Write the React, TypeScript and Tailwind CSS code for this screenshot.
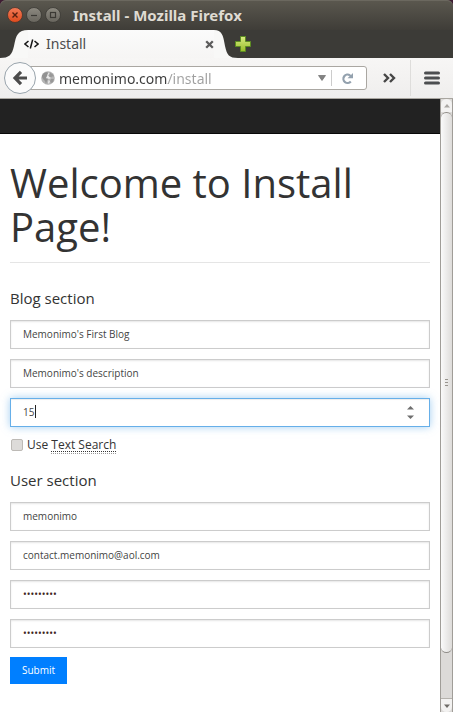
import React from "react";

type FieldProps = {
  id: string;
  label: string;
  value: string;
  type?: string;
};

const fieldClass =
  "block h-[29px] w-full border border-[#cccccc] bg-white px-3 pb-px text-[10px] shadow-[inset_0_1px_2px_rgba(0,0,0,0.1)] outline-none";

function Field({ id, label, value, type = "text" }: FieldProps) {
  const color = type === "password" ? "text-[#3d2420]" : "text-[#444444]";
  return <input id={id} aria-label={label} type={type} defaultValue={value} className={`${fieldClass} ${color}`} />;
}

function PostsField() {
  return (
    <div className="relative">
      <input
        id="posts"
        aria-label="Posts per page"
        type="text"
        inputMode="numeric"
        defaultValue="15"
        className="block h-[29px] w-full border border-[#66afe9] bg-white px-3 pb-px text-[10px] text-[#444444] shadow-[inset_0_1px_1px_rgba(0,0,0,0.075),0_0_8px_rgba(102,175,233,0.6)] outline-none"
      />
      <span className="absolute top-[7px] left-[25px] h-[13px] w-px bg-[#222222]" />
      <div className="absolute inset-y-0 right-4 flex flex-col justify-center gap-1">
        <button type="button" aria-label="Increase" className="flex h-[5px] w-2 items-center justify-center">
          <svg width="7" height="4" viewBox="0 0 7 4">
            <path d="M0 3.5 3.5 0 7 3.5Z" fill="#6e6e6e" />
          </svg>
        </button>
        <button type="button" aria-label="Decrease" className="flex h-[5px] w-2 items-center justify-center">
          <svg width="7" height="4" viewBox="0 0 7 4">
            <path d="M0 .5 3.5 4 7 .5Z" fill="#6e6e6e" />
          </svg>
        </button>
      </div>
    </div>
  );
}

function TitleBar() {
  return (
    <div className="bg-[#3f1d33]">
      <header className="flex h-[30px] items-center rounded-t-md bg-gradient-to-b from-[#5b584f] to-[#3f3d38] pl-[7px] shadow-[inset_0_1px_0_#6b685f]">
        <div className="flex gap-[3px]">
          <button type="button" aria-label="Close window">
            <svg width="16" height="16" viewBox="0 0 16 16">
              <defs>
                <linearGradient id="closeFill" x1="0" y1="0" x2="0" y2="1">
                  <stop offset="0" stopColor="#f37b58" />
                  <stop offset="1" stopColor="#df4a1c" />
                </linearGradient>
              </defs>
              <circle cx="8" cy="8" r="7.5" fill="url(#closeFill)" stroke="#45352d" strokeWidth=".8" />
              <path d="m5.500 5.500 5 5m0-5-5 5" stroke="#572010" strokeWidth="1.400" />
            </svg>
          </button>
          <button type="button" aria-label="Minimize window">
            <svg width="16" height="16" viewBox="0 0 16 16">
              <defs>
                <linearGradient id="greyFill" x1="0" y1="0" x2="0" y2="1">
                  <stop offset="0" stopColor="#8d8a81" />
                  <stop offset="1" stopColor="#68655d" />
                </linearGradient>
              </defs>
              <circle cx="8" cy="8" r="7.500" fill="url(#greyFill)" stroke="#3a3833" strokeWidth=".8" />
              <path d="M5 8.500h6" stroke="#3b3934" strokeWidth="1.200" />
            </svg>
          </button>
          <button type="button" aria-label="Maximize window">
            <svg width="16" height="16" viewBox="0 0 16 16">
              <circle cx="8" cy="8" r="7.500" fill="url(#greyFill)" stroke="#3a3833" strokeWidth=".8" />
              <rect x="5.500" y="5.500" width="5" height="5" fill="none" stroke="#3b3934" strokeWidth="1.200" />
            </svg>
          </button>
        </div>
        <div className="ml-3 font-['Noto_Sans',sans-serif] text-[15px] leading-5 font-bold whitespace-nowrap text-[#dfdbd2]">
          Install - Mozilla Firefox
        </div>
      </header>
    </div>
  );
}

function TabStrip() {
  return (
    <div className="flex h-7 bg-[#3c3b37]">
      <svg width="28" height="28" viewBox="0 0 28 28" className="shrink-0">
        <path d="M0 28C9 28 12 25 14 16C16 5 18 0 28 0V28Z" fill="#f8f8f7" />
      </svg>
      <div className="flex w-[186px] items-center bg-gradient-to-b from-[#fbfbfb] to-[#f6f5f4]">
        <svg width="15" height="10" viewBox="0 0 15 10" className="-ml-1 shrink-0" fill="none" stroke="#171717" strokeWidth="1.500">
          <path d="M4.500 2 1 5l3.500 3M10.500 2 14 5l-3.500 3M8.700 .5 6.300 9.500" />
        </svg>
        <div className="ml-[7px] font-['Noto_Sans',sans-serif] text-[14px] leading-5 text-[#4c4c4c]">Install</div>
        <button type="button" aria-label="Close tab" className="ml-auto">
          <svg width="9" height="9" viewBox="0 0 9 9">
            <path d="m1.200 1.200 6.600 6.600m0-6.600L1.200 7.800" stroke="#5c5c5c" strokeWidth="2.300" />
          </svg>
        </button>
      </div>
      <svg width="24" height="28" viewBox="0 0 24 28" className="shrink-0">
        <path d="M0 0C8 0 9 5 11 16C13 25 15 28 24 28H0Z" fill="#f8f8f7" />
      </svg>
      <button type="button" aria-label="Open a new tab" className="-ml-1">
        <svg width="18" height="18" viewBox="0 0 18 18">
          <defs>
            <linearGradient id="plusFill" x1="0" y1="0" x2="0" y2="1">
              <stop offset="0" stopColor="#d9ec83" />
              <stop offset="1" stopColor="#97bd28" />
            </linearGradient>
          </defs>
          <path d="M6.500 1.500h5v5h5v5h-5v5h-5v-5h-5v-5h5Z" fill="url(#plusFill)" stroke="#5c8c22" />
        </svg>
      </button>
    </div>
  );
}

function Toolbar() {
  return (
    <div className="flex h-[41px] items-center border-b border-[#a9a6a0] bg-gradient-to-b from-[#f7f6f5] to-[#efeeed] pl-1">
      <button
        type="button"
        aria-label="Back"
        className="z-10 flex size-8 shrink-0 items-center justify-center rounded-full border border-[#99a4ac] bg-[#fbfbfb]"
      >
        <svg width="16" height="16" viewBox="0 0 16 16" fill="none" stroke="#4c4c4c" strokeWidth="3.200">
          <path d="M9 1.800 3 8 9 14.200M3 8h12" />
        </svg>
      </button>
      <div className="-ml-2 flex h-6 min-w-0 flex-1 items-center rounded-r-[3px] border border-[#aaa7a2] bg-white pl-3">
        <svg width="14" height="14" viewBox="0 0 14 14" className="shrink-0">
          <circle cx="7" cy="7" r="6.800" fill="#b4b4b4" />
          <path d="M1 4.500 3 2l3-1 1 1-1 2 1 1-2 1 0 1 2 1-1 2-1 3-1-3-2-2-1-2Z" fill="#929292" />
          <path d="m9 1.500 3 2 1 2-2 0-1 1-2-1ZM10 8l3 0-1 3-2 1-1-2Z" fill="#989898" />
          <path d="m7.500 1.500 1 1-1.500 2 1.500 1.500 1.500 1-2 1L6 7l-1 .5M7.500 9 9 10l-1 3-1-1Z" fill="#e9e9e9" />
        </svg>
        <input
          id="address"
          aria-label="Address"
          type="text"
          defaultValue="memonimo.com/install"
          className="ml-1 h-full min-w-0 flex-1 bg-[linear-gradient(to_right,#3c3c3c_109px,#a0a0a0_109px)] bg-clip-text font-['Noto_Sans',sans-serif] text-[14px] text-transparent outline-none"
        />
        <button type="button" aria-label="Show history" className="mr-[5px] shrink-0">
          <svg width="8" height="6" viewBox="0 0 8 6">
            <path d="M.5 .5h7L4 5.500Z" fill="#838383" stroke="#6d6d6d" strokeWidth=".7" />
          </svg>
        </button>
        <div className="h-4 w-px bg-[#cccccc]" />
        <button type="button" aria-label="Reload" className="mr-3 ml-[9px] shrink-0">
          <svg width="13" height="13" viewBox="0 0 13 13">
            <path d="M9 3.300A4.200 4.200 0 1 0 9.800 9.500" fill="none" stroke="#93a1ae" strokeWidth="2.200" />
            <path d="M12 1V6.200H6.500L8.500 4.200 8.200 2.500 10 3Z" fill="#93a1ae" />
          </svg>
        </button>
      </div>
      <button type="button" aria-label="More tools" className="ml-4 shrink-0">
        <svg width="13" height="10" viewBox="0 0 13 10" fill="none" stroke="#464646" strokeWidth="2.400">
          <path d="m1 1 4 4-4 4M7 1l4 4-4 4" />
        </svg>
      </button>
      <div className="ml-[14px] h-9 w-px bg-[#dedddb]" />
      <button type="button" aria-label="Open menu" className="mx-[13px] shrink-0">
        <svg width="16" height="14" viewBox="0 0 16 14" stroke="#4c4e50" strokeWidth="3" strokeLinecap="round">
          <path d="M1.500 2h13M1.500 7h13M1.500 12h13" />
        </svg>
      </button>
    </div>
  );
}

function Scrollbar() {
  return (
    <div className="flex w-[13px] shrink-0 flex-col border-x border-[#a09d98] bg-[#dcdad8]">
      <button
        type="button"
        aria-label="Scroll up"
        className="flex h-[13px] items-center justify-center rounded-t-md bg-[#f3f2f1]"
      >
        <svg width="6" height="4" viewBox="0 0 6 4">
          <path d="M0 3.500 3 0l3 3.500Z" fill="#aaa7a3" />
        </svg>
      </button>
      <div className="flex h-[541px] flex-col items-center justify-center gap-[2px] rounded-md border-y border-[#8f8c87] bg-gradient-to-r from-[#fafafa] to-[#dedcda]">
        <span className="h-px w-[3px] bg-[#99958f]" />
        <span className="h-px w-[3px] bg-[#99958f]" />
        <span className="h-px w-[3px] bg-[#99958f]" />
      </div>
      <div className="flex-1" />
      <button
        type="button"
        aria-label="Scroll down"
        className="flex h-[14px] items-center justify-center rounded-b-md border-t border-[#b5b2ad] bg-[#f3f2f1]"
      >
        <svg width="6" height="4" viewBox="0 0 6 4">
          <path d="M0 .5 3 4 6 .5Z" fill="#6e6b67" />
        </svg>
      </button>
    </div>
  );
}

export default function App() {
  return (
    <div className="flex min-h-screen flex-col bg-white font-['Open_Sans',sans-serif] text-[#333333]">
      <TitleBar />
      <TabStrip />
      <Toolbar />
      <div className="flex flex-1">
        <main className="min-w-0 flex-1">
          <nav aria-label="Site" className="h-[35px] border-b border-[#080808] bg-[#222222]" />
          <div className="px-[10px] pt-[27px]">
            <h1 className="border-b border-[#e5e5e5] pb-[13px] text-[40px] leading-[44px]">Welcome to Install Page!</h1>
            <form onSubmit={(e: React.FormEvent) => e.preventDefault()}>
              <h2 className="mt-[25px] mb-3 text-[15px] leading-5">Blog section</h2>
              <div className="flex flex-col gap-[10px]">
                <Field id="blog" label="Blog name" value="Memonimo's First Blog" />
                <Field id="description" label="Blog description" value="Memonimo's description" />
                <PostsField />
              </div>
              <div className="mt-2 flex h-5 items-center">
                <input
                  id="search"
                  type="checkbox"
                  className="ml-px size-3 appearance-none rounded-[2px] border border-[#bdbab6] bg-[#dddbd9]"
                />
                <label htmlFor="search" className="ml-1 text-[12px] leading-4">
                  Use{" "}
                  <abbr
                    title="Full text search"
                    className="border-b border-dotted border-[#999999] underline decoration-[#333333] decoration-dotted decoration-1 underline-offset-2"
                  >
                    Text Search
                  </abbr>
                </label>
              </div>
              <h2 className="mt-[15px] mb-3 text-[15px] leading-5">User section</h2>
              <div className="flex flex-col gap-[10px]">
                <Field id="user" label="User name" value="memonimo" />
                <Field id="email" label="Email" value="contact.memonimo@aol.com" type="email" />
                <Field id="password" label="Password" value="memonimo1" type="password" />
                <Field id="confirm" label="Confirm password" value="memonimo1" type="password" />
              </div>
              <button type="submit" className="mt-[9px] h-[27px] bg-[#007fff] px-3 text-[10px] text-white">
                Submit
              </button>
            </form>
          </div>
        </main>
        <Scrollbar />
      </div>
    </div>
  );
}
